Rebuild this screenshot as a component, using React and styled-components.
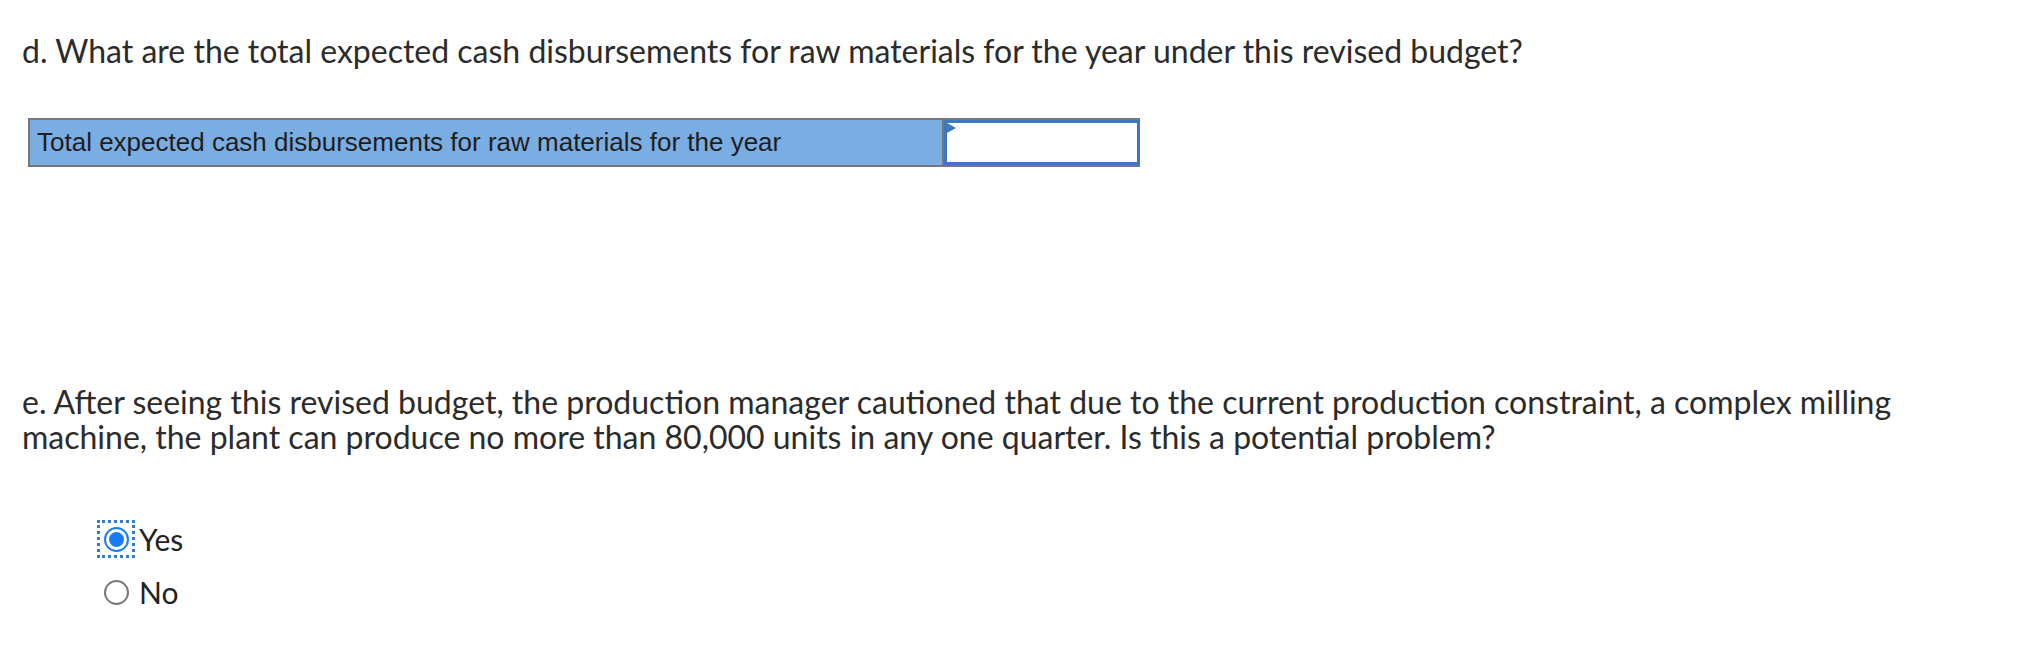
import React from "react";
import styled, { createGlobalStyle } from "styled-components";

const Global = createGlobalStyle`
  html, body { margin: 0; padding: 0; background: #fff; }
  body { font-family: Lato, "Open Sans", sans-serif; color: #2b2b2b; }
`;

const Page = styled.div`
  padding: 33px 0 0 22px;
  width: 2012px;
`;

const Question = styled.p`
  margin: ${(p) => p.$mt || 0}px 0 0 0;
  font-family: Lato, sans-serif;
  font-size: 32px;
  line-height: 35px;
  color: #2b2b2b;
`;

const Table = styled.div`
  margin: 50px 0 0 6px;
  display: grid;
  grid-template-columns: 912px 196px;
  gap: 2px;
  width: 1112px;
  height: 49px;
  box-sizing: border-box;
  border: 2px solid #777;
  background: #777;
`;

const LabelCell = styled.div`
  background: #7aade1;
  display: flex;
  align-items: center;
  padding-left: 7px;
  font-family: "Liberation Sans", Arial, sans-serif;
  font-size: 26px;
  color: #1e1e1e;
`;

const InputCell = styled.div`
  position: relative;
  background: #fff;
  border: 3px solid #3b78be;
  box-sizing: border-box;
`;

const Marker = styled.span`
  position: absolute;
  left: 0;
  top: 0;
  width: 0;
  height: 0;
  border-top: 5px solid transparent;
  border-bottom: 5px solid transparent;
  border-left: 9px solid #3b78be;
`;

const Options = styled.div`
  margin: 66px 0 0 75px;
  display: flex;
  flex-direction: column;
  gap: 15px;
`;

const Option = styled.label`
  display: flex;
  align-items: center;
  gap: 4px;
  height: 38px;
  font-family: Lato, sans-serif;
  font-size: 30px;
  color: #222;
`;

const RadioWrap = styled.span`
  display: flex;
  align-items: center;
  justify-content: center;
  width: 38px;
  height: 38px;
  box-sizing: border-box;
  border: ${(p) => (p.$focus ? "3px dotted #3a7bc8" : "3px solid transparent")};
`;

const Radio = styled.span`
  width: 25px;
  height: 25px;
  border-radius: 50%;
  box-sizing: border-box;
  border: 2px solid ${(p) => (p.$checked ? "#1a7cf5" : "#7a7a7a")};
  display: flex;
  align-items: center;
  justify-content: center;
  &::after {
    content: "";
    display: ${(p) => (p.$checked ? "block" : "none")};
    width: 15px;
    height: 15px;
    border-radius: 50%;
    background: #1a7cf5;
  }
`;

export default function App() {
  return (
    <>
      <Global />
      <Page>
        <Question>
          d. What are the total expected cash disbursements for raw materials for the year under this revised budget?
        </Question>
        <Table>
          <LabelCell>Total expected cash disbursements for raw materials for the year</LabelCell>
          <InputCell>
            <Marker />
          </InputCell>
        </Table>
        <Question $mt={217}>
          e. After seeing this revised budget, the production manager cautioned that due to the current production constraint, a complex milling
          <br />
          machine, the plant can produce no more than 80,000 units in any one quarter. Is this a potential problem?
        </Question>
        <Options>
          <Option>
            <RadioWrap $focus>
              <Radio $checked />
            </RadioWrap>
            Yes
          </Option>
          <Option>
            <RadioWrap>
              <Radio />
            </RadioWrap>
            No
          </Option>
        </Options>
      </Page>
    </>
  );
}
